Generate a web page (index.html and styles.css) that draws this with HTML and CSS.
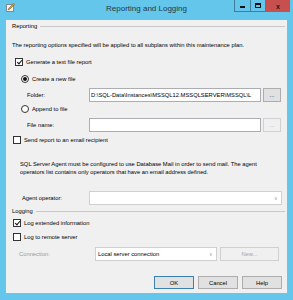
FILE: index.html
```html
<!DOCTYPE html>
<html lang="en">
<head>
    <meta charset="UTF-8">
    <title>Reporting and Logging</title>
    <link rel="stylesheet" href="styles.css">
</head>
<body>
    <div class="window">
        <div class="titlebar">
            <div class="title-left">
                <svg class="app-icon" width="9" height="9" viewBox="0 0 9 9">
                    <rect x="0.5" y="1.5" width="7" height="7" fill="#f4f4f4" stroke="#7a8a99"/>
                    <path d="M2 7 L3 5 L7.5 0.5 L8.5 1.5 L4 6 Z" fill="#e0a030" stroke="#8a5a10" stroke-width="0.6"/>
                </svg>
            </div>
            <div class="title">Reporting and Logging</div>
            <div class="caption-buttons">
                <span class="cap min"><i class="min-bar"></i></span>
                <span class="cap max"><i class="max-box"></i></span>
                <span class="cap close">x</span>
            </div>
        </div>

        <div class="client">
            <div class="group-head row-head"><span>Reporting</span><i class="rule"></i></div>
            <div class="row note">The reporting options specified will be applied to all subplans within this maintenance plan.</div>

            <div class="row gen"><span class="check checked"></span>Generate a text file report</div>
            <div class="row create"><span class="radio selected"></span>Create a new file</div>
            <div class="row field folder">
                <span class="field-label">Folder:</span>
                <span class="textbox">D:\SQL-Data\Instances\MSSQL12.MSSQLSERVER\MSSQL\L</span>
                <span class="btn small">...</span>
            </div>
            <div class="row append"><span class="radio"></span>Append to file</div>
            <div class="row field filename">
                <span class="field-label">File name:</span>
                <span class="textbox"></span>
                <span class="btn small disabled">...</span>
            </div>
            <div class="row send"><span class="check"></span>Send report to an email recipient</div>

            <p class="para">SQL Server Agent must be configured to use Database Mail in order to send mail. The agent<br>operators list contains only operators that have an email address defined.</p>

            <div class="row field agent">
                <span class="field-label">Agent operator:</span>
                <span class="combo"><span class="combo-text"></span><span class="arrow">&#8744;</span></span>
            </div>

            <div class="group-head logging"><span>Logging</span><i class="rule"></i></div>
            <div class="row logext"><span class="check checked"></span>Log extended information</div>
            <div class="row logremote"><span class="check"></span>Log to remote server</div>
            <div class="row field conn disabled-text">
                <span class="field-label">Connection:</span>
                <span class="combo"><span class="combo-text">Local server connection</span><span class="arrow">&#8744;</span></span>
                <span class="btn new disabled">New...</span>
            </div>

            <div class="actions">
                <span class="btn action default">OK</span>
                <span class="btn action">Cancel</span>
                <span class="btn action">Help</span>
            </div>
        </div>
    </div>
</body>
</html>
```

FILE: styles.css
```css
* {
    margin: 0;
    padding: 0;
    box-sizing: border-box;
}

body {
    font-family: 'Liberation Sans', Arial, sans-serif;
    font-size: 5.8px;
    color: #000;
    background-color: #64c6ea;
}

.window {
    width: 293px;
    height: 300px;
    background-color: #64c6ea;
    padding: 0 5px 6px 5px;
    display: flex;
    flex-direction: column;
}

.titlebar {
    height: 19px;
    display: grid;
    grid-template-columns: 1fr auto 1fr;
    align-items: start;
}

.title-left {
    padding-top: 3px;
    padding-left: 1px;
}

.app-icon {
    display: block;
}

.title {
    font-size: 8px;
    color: #1c3a4c;
    padding-top: 4px;
}

.caption-buttons {
    display: flex;
    justify-content: flex-end;
    margin-right: -2px;
}

.cap {
    height: 12px;
    border: 1px solid #3f7f9c;
    border-top: none;
    display: flex;
    align-items: center;
    justify-content: center;
}

.min {
    width: 17px;
}

.max {
    width: 15px;
    border-left: none;
}

.close {
    width: 24px;
    border: none;
    background-color: #c7504f;
    color: #1a1a1a;
    font-weight: bold;
    font-size: 7px;
}

.min-bar {
    width: 5px;
    height: 2px;
    margin-top: 3px;
    background-color: #111;
}

.max-box {
    width: 6px;
    height: 5px;
    border: 1px solid #111;
    border-top-width: 2px;
}

.client {
    flex: 1;
    background-color: #f0f0f0;
    border: 1px solid #8fb8cc;
    padding: 1px 0 0 6px;
    display: flex;
    flex-direction: column;
    position: relative;
}

.row {
    height: 10px;
    display: flex;
    align-items: center;
    white-space: nowrap;
}

.group-head {
    height: 10px;
    display: flex;
    align-items: center;
    gap: 3px;
    padding-right: 2px;
}

.rule {
    flex: 1;
    border-top: 1px solid #c8c8c8;
}

.note { margin-top: 9px; }
.gen { margin-top: 7px; padding-left: 3px; }
.create { margin-top: 7px; padding-left: 9px; }
.folder { margin-top: 4px; padding-left: 15px; }
.append { margin-top: 2px; padding-left: 9px; }
.filename { margin-top: 4px; padding-left: 15px; }
.send { margin-top: 3px; padding-left: 1px; }
.agent { margin-top: 15px; padding-left: 10px; }
.logging { margin-top: 1px; }
.logext { margin-top: 2px; padding-left: 1px; }
.logremote { margin-top: 4px; padding-left: 1px; }
.conn { margin-top: 5px; padding-left: 7px; }

.field {
    height: 14px;
}

.field-label {
    width: 62px;
}

.agent .field-label {
    width: 67px;
}

.conn .field-label {
    width: 76px;
}

.para {
    margin-top: 15px;
    padding-left: 8px;
    line-height: 8px;
    height: 16px;
}

.check {
    width: 8px;
    height: 8px;
    border: 1px solid #333;
    background-color: #fff;
    margin-right: 3px;
    position: relative;
}

.check.checked::after {
    content: "";
    position: absolute;
    left: 2px;
    top: 0;
    width: 2px;
    height: 4px;
    border: solid #111;
    border-width: 0 1px 1px 0;
    transform: rotate(40deg);
}

.radio {
    width: 8px;
    height: 8px;
    border: 1px solid #333;
    border-radius: 50%;
    background-color: #fff;
    margin-right: 3px;
    display: flex;
    align-items: center;
    justify-content: center;
}

.radio.selected::after {
    content: "";
    width: 4px;
    height: 4px;
    border-radius: 50%;
    background-color: #111;
}

.textbox {
    width: 172px;
    height: 14px;
    border: 1px solid #abadb3;
    background-color: #fff;
    padding: 0 1px;
    line-height: 12px;
    overflow: hidden;
}

.btn {
    height: 14px;
    border: 1px solid #adadad;
    background-color: #e1e1e1;
    display: flex;
    align-items: center;
    justify-content: center;
}

.btn.small {
    width: 18px;
    margin-left: 2px;
}

.btn.disabled {
    background-color: #f0f0f0;
    border-color: #d0d0d0;
    color: #a6a6a6;
}

.combo {
    width: 193px;
    height: 14px;
    border: 1px solid #d0d0d0;
    background-color: #fff;
    display: flex;
    align-items: center;
    padding: 0 3px 0 2px;
}

.combo-text {
    flex: 1;
}

.arrow {
    color: #a0a0a0;
    font-size: 5px;
}

.conn .combo {
    width: 122px;
    color: #000;
}

.disabled-text {
    color: #9a9a9a;
}

.btn.new {
    width: 59px;
    margin-left: 3px;
}

.actions {
    margin-top: 15px;
    display: flex;
    justify-content: flex-end;
    gap: 4px;
    padding-right: 5px;
}

.btn.action {
    width: 40px;
    height: 13px;
}

.btn.default {
    border-color: #3c7fb1;
}
```
